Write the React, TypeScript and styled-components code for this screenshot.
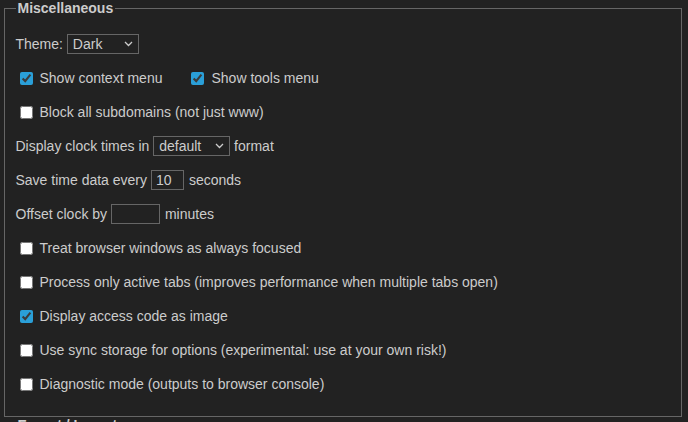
import React from "react";
import styled, { createGlobalStyle } from "styled-components";

const GlobalStyle = createGlobalStyle`
  html, body {
    margin: 0;
    padding: 0;
    background: #222;
    color: #ccc;
    font-family: "Liberation Sans", Arial, sans-serif;
    font-size: 14px;
  }
`;

const Page = styled.div`
  padding: 0 6px 0 4px;
  overflow: hidden;
  height: 422px;
`;

const Fieldset = styled.fieldset`
  margin: 0;
  padding: 5px 10.5px 22px;
  border: 1px solid #666;
  min-width: 0;
`;

const Legend = styled.legend`
  font-weight: bold;
  padding: 0 2px;
  line-height: 16px;
`;

const Rows = styled.div`
  display: flex;
  flex-direction: column;
  gap: 14px;
  padding-top: 13px;
`;

const Row = styled.div<{ $gap?: number }>`
  display: flex;
  align-items: center;
  height: 20px;
  white-space: pre;
  gap: ${(p) => p.$gap ?? 0}px;
`;

const CheckLabel = styled.label`
  display: flex;
  align-items: center;
  white-space: pre;
`;

const Check = styled.input.attrs({ type: "checkbox" })`
  width: 13px;
  height: 13px;
  margin: 3px 7px 3px 4px;
  accent-color: #2a9fd8;
`;

const SelectWrap = styled.span<{ $w: number }>`
  position: relative;
  display: inline-flex;
  width: ${(p) => p.$w}px;
  height: 20px;
`;

const Select = styled.select`
  appearance: none;
  width: 100%;
  height: 20px;
  margin: 0;
  padding: 0 0 0 5px;
  background: #222;
  color: #ccc;
  border: 1px solid #666;
  border-radius: 0;
  font: inherit;
  line-height: 18px;
`;

const Chevron = styled.svg`
  position: absolute;
  right: 6px;
  top: 7px;
  pointer-events: none;
`;

const TextInput = styled.input<{ $w: number }>`
  width: ${(p) => p.$w}px;
  height: 20px;
  box-sizing: border-box;
  margin: 0 5px 0 0;
  padding: 0 4px;
  background: #222;
  color: #ccc;
  border: 1px solid #666;
  font: inherit;
`;

const Dropdown = ({ w, value, options }: { w: number; value: string; options: string[] }) => (
  <SelectWrap $w={w}>
    <Select defaultValue={value}>
      {options.map((o) => (
        <option key={o}>{o}</option>
      ))}
    </Select>
    <Chevron width="9" height="6" viewBox="0 0 9 6">
      <path d="M1 1l3.5 3.5L8 1" fill="none" stroke="#ccc" strokeWidth="1.3" />
    </Chevron>
  </SelectWrap>
);

const Option = ({ checked, children }: { checked?: boolean; children: React.ReactNode }) => (
  <CheckLabel>
    <Check defaultChecked={checked} />
    {children}
  </CheckLabel>
);

export default function App() {
  return (
    <Page>
      <GlobalStyle />
      <Fieldset>
        <Legend>Miscellaneous</Legend>
        <Rows>
          <Row>
            {"Theme: "}
            <Dropdown w={72} value="Dark" options={["Dark", "Light"]} />
          </Row>
          <Row $gap={25}>
            <Option checked>Show context menu</Option>
            <Option checked>Show tools menu</Option>
          </Row>
          <Row>
            <Option>Block all subdomains (not just www)</Option>
          </Row>
          <Row>
            {"Display clock times in "}
            <Dropdown w={77} value="default" options={["default", "12-hour", "24-hour"]} />
            {" format"}
          </Row>
          <Row>
            {"Save time data every "}
            <TextInput $w={33} defaultValue="10" />
            {"seconds"}
          </Row>
          <Row>
            {"Offset clock by "}
            <TextInput $w={49} defaultValue="" />
            {"minutes"}
          </Row>
          <Row>
            <Option>Treat browser windows as always focused</Option>
          </Row>
          <Row>
            <Option>Process only active tabs (improves performance when multiple tabs open)</Option>
          </Row>
          <Row>
            <Option checked>Display access code as image</Option>
          </Row>
          <Row>
            <Option>Use sync storage for options (experimental: use at your own risk!)</Option>
          </Row>
          <Row>
            <Option>Diagnostic mode (outputs to browser console)</Option>
          </Row>
        </Rows>
      </Fieldset>
      <Fieldset>
        <Legend>Export / Import</Legend>
        <Rows>
          <Row>Export settings</Row>
        </Rows>
      </Fieldset>
    </Page>
  );
}
